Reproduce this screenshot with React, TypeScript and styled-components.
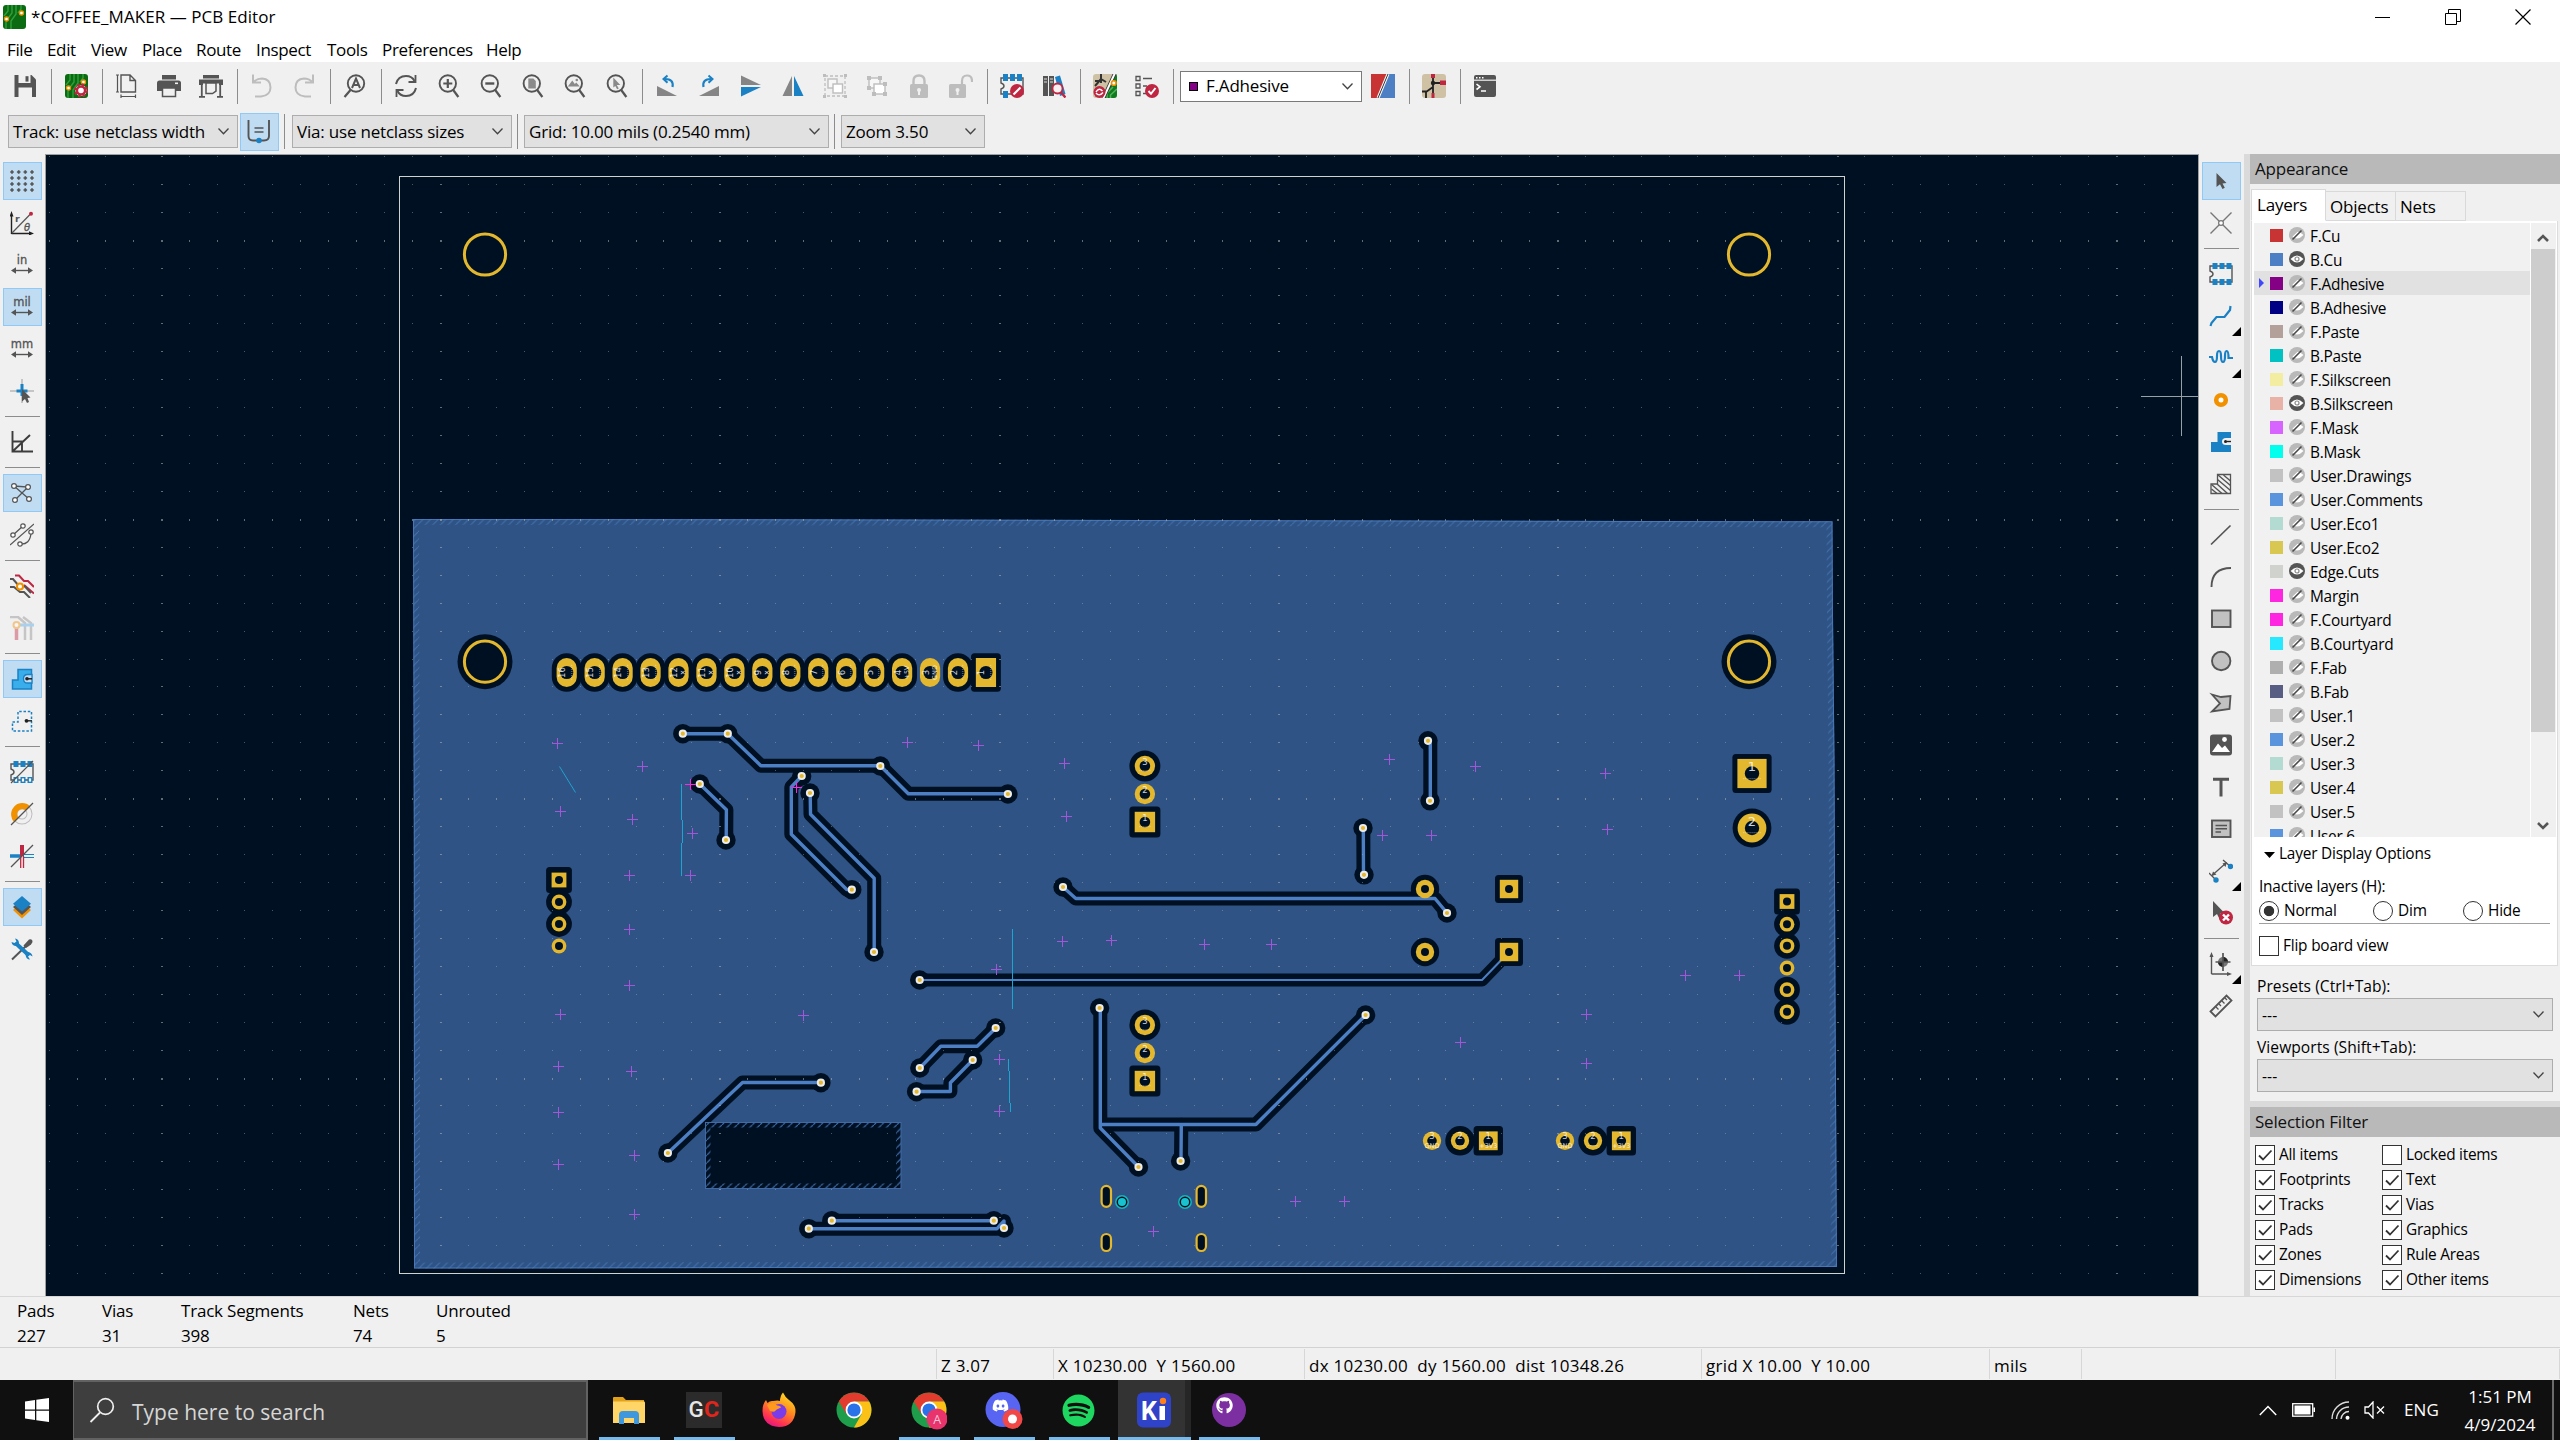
import React from "react";
import styled, { createGlobalStyle } from "styled-components";
import { FaDiscord, FaSpotify, FaGithub } from "react-icons/fa";

const NAVY = "#001023";
const GOLD = "#e3b72e";
const COPPER = "#4d7fc4";
const INK = "#545454";
const BLUE = "#1a81c4";
const RED = "#bf2641";
const AMBER = "#f29100";
const PALE = "#bdbdbd";

const Global = createGlobalStyle`
  *, *::before, *::after { box-sizing: border-box; }
  html, body { margin: 0; padding: 0; background: #f0f0f0; }
  body { width: 2560px; height: 1440px; overflow: hidden; }
  svg { display: block; flex: none; }
`;

const Screen = styled.div`
  width: 2560px;
  height: 1440px;
  display: flex;
  flex-direction: column;
  background: #f0f0f0;
  color: #000;
  font-family: "Open Sans", "Noto Sans", sans-serif;
  font-size: 17px;
  letter-spacing: -0.2px;
  line-height: 24px;
  white-space: pre;
  overflow: hidden;
`;

/* ---------- title and menu ---------- */

const TitleBar = styled.header`
  height: 34px;
  display: flex;
  align-items: center;
  background: #fff;
  padding: 0 2px 0 2px;
`;
const Title = styled.span`
  margin-left: 5px;
  flex: 1;
  letter-spacing: 0.05px;
`;
const WindowButton = styled.span`
  width: 70px;
  height: 34px;
  display: flex;
  align-items: center;
  justify-content: center;
`;
const MenuBar = styled.nav`
  height: 28px;
  background: #fff;
  display: flex;
  align-items: center;
  padding: 3px 0 0 7px;
  letter-spacing: -0.35px;
`;
const MenuItem = styled.span<{ $w: number }>`
  width: ${(p) => p.$w}px;
`;

/* ---------- toolbars ---------- */

const ToolRow = styled.div`
  height: 48px;
  display: flex;
  align-items: center;
  padding-left: 4px;
`;
const ComboRow = styled.div`
  height: 44px;
  display: flex;
  align-items: center;
  padding: 0 0 1px 8px;
`;
const ToolCell = styled.span`
  position: relative;
  flex: none;
  width: 42px;
  height: 42px;
  display: flex;
  align-items: center;
  justify-content: center;
`;
const ToolFace = styled.span<{ $on?: boolean }>`
  width: 39px;
  height: 38px;
  display: flex;
  align-items: center;
  justify-content: center;
  border: 1px solid ${(p) => (p.$on ? "#90c8f6" : "transparent")};
  background: ${(p) => (p.$on ? "#c0dcf3" : "transparent")};
`;
const Corner = styled.i`
  position: absolute;
  right: 1px;
  bottom: 1px;
  border-left: 9px solid transparent;
  border-bottom: 9px solid #000;
`;
const VSep = styled.i<{ $l?: number; $r?: number }>`
  flex: none;
  width: 1px;
  height: 35px;
  background: #8c8c8c;
  margin-left: ${(p) => p.$l ?? 5}px;
  margin-right: ${(p) => p.$r ?? 3}px;
`;
const HSep = styled.i`
  flex: none;
  width: 35px;
  height: 1px;
  margin: 4px 0;
  background: #8c8c8c;
`;
const Combo = styled.div<{ $w: number; $h?: number; $white?: boolean }>`
  flex: none;
  width: ${(p) => p.$w}px;
  height: ${(p) => p.$h ?? 33}px;
  display: flex;
  align-items: center;
  justify-content: space-between;
  padding: 0 7px 0 4px;
  border: 1px solid ${(p) => (p.$white ? "#7a7a7a" : "#adadad")};
  background: ${(p) => (p.$white ? "#fff" : "#e1e1e1")};
`;
const ComboLabel = styled.span`
  display: flex;
  align-items: center;
  gap: 8px;
`;
const ComboSwatch = styled.i`
  width: 9px;
  height: 9px;
  background: #840084;
  border: 1px solid #000;
  margin-left: 4px;
`;

/* ---------- main area ---------- */

const Main = styled.main`
  height: 1143px;
  display: flex;
  border-bottom: 1px solid #d7d7d7;
`;
const SideBar = styled.div`
  flex: none;
  width: 45px;
  display: flex;
  flex-direction: column;
  align-items: center;
  padding: 6px 1px 0 0;
`;
const CanvasFrame = styled.div`
  flex: none;
  width: 2154px;
  height: 1142px;
  border: solid #a0a0a0;
  border-width: 1px 1px 0 1px;
  background: ${NAVY};
`;
const Splitter = styled.i`
  flex: none;
  width: 6px;
  background: #dadada;
`;
const Panels = styled.aside`
  flex: none;
  width: 310px;
  display: flex;
  flex-direction: column;
`;
const PaneHeader = styled.h2`
  margin: 0;
  flex: none;
  height: 30px;
  padding: 0 0 0 5px;
  background: #b9b9b9;
  color: #111;
  font-weight: 400;
  font-size: 17px;
  line-height: 30px;
`;
const TabStrip = styled.div`
  height: 37px;
  display: flex;
  align-items: flex-end;
  padding-left: 1px;
  font-size: 17px;
`;
const Tab = styled.span<{ $active?: boolean; $w: number }>`
  width: ${(p) => p.$w}px;
  height: ${(p) => (p.$active ? 32 : 30)}px;
  padding: ${(p) => (p.$active ? "3px 0 0 5px" : "3px 0 0 4px")};
  border: 1px solid #d9d9d9;
  border-left-width: ${(p) => (p.$active ? 1 : 0)}px;
  border-bottom-color: ${(p) => (p.$active ? "#fff" : "#d9d9d9")};
  background: ${(p) => (p.$active ? "#fff" : "#f0f0f0")};
`;
const TabPage = styled.div`
  width: 307px;
  height: 745px;
  margin-left: 1px;
  padding: 2px 0 0 2px;
  background: #fff;
  border: 1px solid #dcdcdc;
  border-top: none;
  font-size: 15.4px;
`;
const ListBox = styled.div`
  display: flex;
  height: 614px;
  overflow: hidden;
  width: 303px;
`;
const LayerList = styled.div`
  width: 276px;
  background: #f1f1f1;
`;
const LayerRow = styled.div<{ $active?: boolean }>`
  height: 24px;
  display: flex;
  align-items: center;
  padding-left: 5px;
  background: ${(p) => (p.$active ? "#e1e1e1" : "transparent")};
`;
const Arrow = styled.i<{ $on?: boolean }>`
  flex: none;
  width: 5px;
  height: 10px;
  border: 5px solid transparent;
  border-right: 0;
  border-left-color: ${(p) => (p.$on ? "#3f48ff" : "transparent")};
  margin-right: 6px;
`;
const Swatch = styled.i<{ $c: string }>`
  flex: none;
  width: 13px;
  height: 13px;
  background: ${(p) => p.$c};
  margin-right: 6px;
`;
const LayerName = styled.span`
  margin-left: 5px;
  padding-top: 3px;
  letter-spacing: -0.25px;
`;
const ScrollBar = styled.div`
  width: 26px;
  display: flex;
  flex-direction: column;
  align-items: center;
  background: #f0f0f0;
  border-left: 1px solid #fff;
  padding-right: 1px;
`;
const ScrollEnd = styled.span`
  height: 26px;
  display: flex;
  align-items: center;
  padding-top: 3px;
`;
const Thumb = styled.i`
  width: 24px;
  height: 483px;
  background: #cdcdcd;
  margin-bottom: 79px;
`;
const OptionsTitle = styled.div`
  display: flex;
  align-items: center;
  gap: 4px;
  padding: 0 0 0 10px;
  height: 34px;
  margin-bottom: 4px;
`;
const FieldLabel = styled.div`
  height: 24px;
  padding-left: 5px;
`;
const RadioLine = styled.div`
  display: flex;
  align-items: center;
  margin-left: 5px;
  width: 291px;
  height: 25px;
  border-bottom: 1px solid #a0a0a0;
`;
const RadioItem = styled.span<{ $w: number }>`
  width: ${(p) => p.$w}px;
  display: flex;
  align-items: center;
  gap: 5px;
`;
const Radio = styled.i<{ $on?: boolean }>`
  width: 20px;
  height: 20px;
  border-radius: 50%;
  border: 1px solid #333;
  background: ${(p) => (p.$on ? "radial-gradient(circle, #333 0 4.8px, #fff 5.6px)" : "#fff")};
`;
const FlipRow = styled.div`
  padding: 9px 0 0 5px;
`;
const CheckItem = styled.span`
  display: flex;
  align-items: center;
  gap: 4px;
  height: 25px;
`;
const Box = styled.i`
  flex: none;
  width: 20px;
  height: 20px;
  background: #fff;
  border: 1px solid #333;
`;
const PresetBlock = styled.div`
  height: 135px;
  padding: 8px 0 0 7px;
  font-size: 15.6px;
  letter-spacing: 0.05px;
`;
const PresetLabel = styled.div`
  height: 24px;
`;
const PresetGap = styled.div`
  height: 4px;
`;
const Sash = styled.i`
  height: 6px;
  background: #dadada;
`;
const FilterGrid = styled.div`
  display: grid;
  grid-template-columns: 127px 160px;
  padding: 5px 0 0 5px;
  font-size: 15.4px;
  letter-spacing: -0.25px;
`;

/* ---------- bottom ---------- */

const InfoPanel = styled.section`
  height: 51px;
  display: flex;
  padding: 1px 0 0 17px;
  border-bottom: 1px solid #d2d2d2;
`;
const InfoItem = styled.div<{ $w: number }>`
  width: ${(p) => p.$w}px;
  display: flex;
  flex-direction: column;
  line-height: 25px;
`;
const StatusBar = styled.footer`
  height: 32px;
  display: flex;
  align-items: center;
  padding-bottom: 1px;
`;
const StatusCell = styled.span<{ $w: number }>`
  width: ${(p) => p.$w}px;
  height: 30px;
  line-height: 34px;
  padding-left: 4px;
  border-right: 1px solid #d7d7d7;
  letter-spacing: 0.25px;
`;
const TaskBar = styled.div`
  height: 60px;
  display: flex;
  background: #101010;
  color: #fff;
`;
const StartButton = styled.span`
  width: 73px;
  display: flex;
  align-items: center;
  justify-content: center;
`;
const SearchBox = styled.div`
  width: 515px;
  display: flex;
  align-items: center;
  gap: 17px;
  padding-left: 15px;
  background: #3e3e3e;
  border: 2px solid #626262;
  border-left-width: 1px;
  color: #d6d6d6;
  margin-right: 4px;
`;
const SearchText = styled.span`
  font-size: 21px;
  letter-spacing: 0;
  padding-top: 4px;
`;
const TaskItem = styled.span<{ $open?: boolean; $active?: boolean }>`
  width: ${(p) => (p.$active ? 73 : 61)}px;
  margin: 0 ${(p) => (p.$active ? 1 : 7)}px;
  padding: 3px ${(p) => (p.$active ? 1 : 2)}px 0 0;
  display: flex;
  align-items: center;
  justify-content: center;
  border-bottom: 3px solid ${(p) => (p.$open ? "#76b9ed" : "transparent")};
  background: ${(p) => (p.$active ? "linear-gradient(90deg, #333 0 67px, #262626 67px)" : "none")};
`;
const Tray = styled.div`
  margin-left: auto;
  display: flex;
  align-items: center;
`;
const Clock = styled.div`
  width: 92px;
  margin-left: 14px;
  text-align: center;
  line-height: 28px;
  padding-top: 1px;
  letter-spacing: 0;
`;
const TrayText = styled.span`
  width: 34px;
  margin-left: 19px;
  letter-spacing: 0.1px;
`;
const ShowDesktop = styled.i`
  width: 8px;
  height: 60px;
  border-left: 2px solid #6b6b6b;
  margin-left: 6px;
`;
const Gap = styled.i<{ $w: number }>`
  flex: none;
  width: ${(p) => p.$w}px;
`;

/* ---------- icons ---------- */

const Svg: React.FC<{ w?: number; h?: number; children: React.ReactNode }> = ({ w = 24, h = 24, children }) => (
  <svg width={w} height={h} viewBox={`0 0 ${w} ${h}`} fill="none">
    {children}
  </svg>
);

const Chevron = () => (
  <Svg w={13} h={9}>
    <path d="M1.5 1.5 L6.5 6.8 L11.5 1.5" stroke="#444" strokeWidth="1.3" />
  </Svg>
);

const Lens = ({ children }: { children?: React.ReactNode }) => (
  <>
    <circle cx="11.8" cy="9.5" r="8.2" stroke={INK} strokeWidth="1.9" />
    <path d="M17.2 16 L22.4 23" stroke={INK} strokeWidth="2.2" />
    <g transform="translate(-0.7 0)">{children}</g>
  </>
);

const PcbBase = () => (
  <>
    <rect x="1" y="0" width="23" height="24" rx="3" fill="#0a6b12" />
    <path d="M6 0 v6 l-4 5 M10 0 v8 l-6 8 v8 M14 0 v9 l-5 7 v8 M19 0 v4 l-3 4" stroke="#2fa03a" strokeWidth="1.4" />
    <circle cx="4.5" cy="14" r="2" fill="#fff" stroke={AMBER} strokeWidth="1.3" />
    <circle cx="19.5" cy="8" r="2" fill="#fff" stroke={AMBER} strokeWidth="1.3" />
  </>
);

const Chip = ({ outline }: { outline?: boolean }) => (
  <>
    <path d="M1 4 H23 V20 H1 V15 Q4 14 4 12 Q4 10 1 9 Z" stroke={INK} strokeWidth="1.4" />
    {[3.5, 10.5, 17.5].map((x) => (
      <g key={x}>
        <rect x={x} y="1" width="5" height="6" fill={BLUE} />
        <rect
          x={x + (outline ? 0.7 : 0)}
          y={outline ? 17.7 : 17}
          width={outline ? 3.6 : 5}
          height={outline ? 4.6 : 6}
          fill={outline ? "#fff" : BLUE}
          stroke={outline ? BLUE : "none"}
          strokeWidth="1.4"
        />
      </g>
    ))}
  </>
);

const UnitArrow = ({ label }: { label: string }) => (
  <>
    <text x="12" y="11" textAnchor="middle" fontFamily="DejaVu Sans" fontWeight="400" fontSize={11.5} letterSpacing="0" fill={INK} stroke={INK} strokeWidth="0.3">{label}</text>
    <path d="M3 17.5 H21" stroke={INK} strokeWidth="1.4" />
    <path d="M1 17.5 L6 14.3 V20.7 Z M23 17.5 L18 14.3 V20.7 Z" fill={INK} />
  </>
);

const icons: Record<string, React.ReactNode> = {
  save: (
    <>
      <path d="M1.5 1 H18.5 L23 5.5 V23 H1.5 Z" fill={INK} />
      <rect x="5.5" y="1" width="12" height="8" fill="#f0f0f0" />
      <rect x="12.5" y="2.2" width="3" height="5.4" fill={INK} />
      <rect x="5.5" y="13.5" width="13.5" height="9.5" fill="#f0f0f0" />
    </>
  ),
  setup: (
    <>
      <PcbBase />
      <circle cx="17" cy="16.5" r="5.6" fill="#fff" stroke={RED} strokeWidth="3" strokeDasharray="2.4 2" />
      <circle cx="17" cy="16.5" r="4" fill="#fff" stroke={RED} strokeWidth="2.4" />
    </>
  ),
  page: (
    <>
      <path d="M6 1 H15 L20.500 6.5 V18 H6 Z M15 1 V6.5 H20.500" stroke={INK} strokeWidth="1.4" />
      <path d="M2.500 1 V18 M1 1 H4 M1 18 H4 M6 22.5 H20.500 M6 20.5 V24 M20.500 20.5 V24" stroke={INK} strokeWidth="1.2" />
    </>
  ),
  print: (
    <>
      <rect x="5" y="1" width="14" height="4.5" fill={INK} />
      <path d="M0 9 Q0 6.5 2.5 6.5 H21.5 Q24 6.5 24 9 V17 H0 Z" fill={INK} />
      <rect x="5.5" y="14" width="13" height="8.5" fill="#f0f0f0" stroke={INK} strokeWidth="1.5" />
      <rect x="18" y="8.5" width="3" height="1.6" fill="#f0f0f0" />
    </>
  ),
  plot: (
    <>
      <rect x="4" y="1" width="16" height="3.5" fill={INK} />
      <path d="M0 5.5 H24 V11 H20 V9.5 H4 V11 H0 Z" fill={INK} />
      <path d="M7 9 H17 V17 L13.5 19.5 H7 Z" fill="#f0f0f0" stroke={INK} strokeWidth="1.5" />
      <path d="M2.8 11 V23 M21.2 11 V23 M0 22.8 H6 M18 22.8 H24" stroke={INK} strokeWidth="1.8" />
    </>
  ),
  undo: <path d="M3 0.5 V8.5 H11 M3.5 8 Q7 4.500 12 4.5 Q20.500 5 20.500 13.500 Q20.500 21.500 11 22.500 H5" stroke={PALE} strokeWidth="2" />,
  redo: <path d="M21 0.5 V8.5 H13 M20.5 8 Q17 4.500 12 4.5 Q3.500 5 3.500 13.500 Q3.500 21.500 13 22.500 H19" stroke={PALE} strokeWidth="2" />,
  find: (
    <>
      <circle cx="13" cy="9.5" r="8.2" stroke={INK} strokeWidth="1.9" />
      <path d="M7.5 16 L1.5 23" stroke={INK} strokeWidth="2.2" />
      <path d="M9 14 L13 4.5 L17 14 M10.5 11 H15.5" stroke={INK} strokeWidth="2" />
    </>
  ),
  refresh: (
    <>
      <path d="M2 10 Q4 2 12 2 Q18 2 20.5 7 M22 14 Q20 22 12 22 Q6 22 3.5 17" stroke={INK} strokeWidth="2" />
      <path d="M21.5 1 V8 H14.5 M2.5 23 V16 H9.5" stroke={INK} strokeWidth="1.8" />
    </>
  ),
  zoomIn: <Lens><path d="M12.5 5 V14 M8 9.5 H17" stroke={INK} strokeWidth="2.2" /></Lens>,
  zoomOut: <Lens><path d="M8 9.5 H17" stroke={INK} strokeWidth="2.4" /></Lens>,
  zoomPage: <Lens><path d="M9 4.5 H14 L16.5 7 V14.5 H9 Z" fill="#8a8a8a" /></Lens>,
  zoomObj: (
    <Lens>
      <path d="M6.5 12.5 L11 6.5 L13.5 10 L15 8.5 L18.5 12.5 Z" fill="#8a8a8a" />
      <circle cx="15.5" cy="6" r="1.3" fill="#8a8a8a" />
    </Lens>
  ),
  zoomSel: <Lens><path d="M10 3.5 L17 11 L13.5 11 L15.5 14.5 L13.8 15.3 L12 12 L10 13.5 Z" fill="#8a8a8a" /></Lens>,
  rotL: (
    <>
      <path d="M2 12 L22 22 H2 Z" fill="#858585" />
      <path d="M17.5 13 Q19 5 10 5" stroke={BLUE} strokeWidth="2.2" />
      <path d="M12.5 1.5 L8.5 5 L12.5 8.8" stroke={BLUE} strokeWidth="2" />
    </>
  ),
  rotR: (
    <>
      <path d="M22 12 L2 22 H22 Z" fill="#858585" />
      <path d="M6.5 13 Q5 5 14 5" stroke={BLUE} strokeWidth="2.2" />
      <path d="M11.5 1.5 L15.5 5 L11.5 8.8" stroke={BLUE} strokeWidth="2" />
    </>
  ),
  mirV: (
    <>
      <path d="M2 1.5 L22 11 H2 Z" fill="#858585" />
      <path d="M2 13 H22 L2 22.5 Z" fill={BLUE} />
    </>
  ),
  mirH: (
    <>
      <path d="M11 2 V22 H1.5 Z" fill="#858585" />
      <path d="M13 2 V22 H22.5 Z" fill={BLUE} />
    </>
  ),
  group: (
    <>
      <rect x="2" y="2" width="20" height="20" stroke={PALE} strokeWidth="1.3" strokeDasharray="3 2" />
      <rect x="5" y="5" width="9" height="9" fill="#f7f7f7" stroke={PALE} strokeWidth="1.4" />
      <rect x="10" y="10" width="9.5" height="9" fill="#fff" stroke={PALE} strokeWidth="1.4" />
      <path d="M0 0h3v3H0z M21 0h3v3h-3z M0 21h3v3H0z M21 21h3v3h-3z" fill={PALE} />
    </>
  ),
  ungroup: (
    <>
      <rect x="4" y="4" width="11" height="10" fill="#f7f7f7" stroke={PALE} strokeWidth="1.4" />
      <rect x="9" y="10" width="11" height="10" fill="#fff" stroke={PALE} strokeWidth="1.4" />
      <path d="M2 2h4v4H2z M13 2h4v4h-4z M2 12h4v4H2z M7 18h4v4H7z M18 18h4v4h-4z M18 8h4v4h-4z" fill={PALE} />
    </>
  ),
  lock: (
    <>
      <path d="M6.5 11 V7 Q6.5 1.500 12 1.5 Q17.5 1.500 17.5 7 V11" stroke={PALE} strokeWidth="2.4" />
      <rect x="3" y="10" width="18" height="14" rx="1.5" fill={PALE} />
      <circle cx="12" cy="16" r="2" fill="#f0f0f0" />
      <rect x="11" y="16" width="2" height="5" fill="#f0f0f0" />
    </>
  ),
  unlock: (
    <>
      <path d="M13 11 V7 Q13 1.500 18 1.5 Q23 1.500 23 7 V8" stroke={PALE} strokeWidth="2.2" />
      <rect x="0" y="10" width="17" height="14" rx="1.5" fill={PALE} />
      <circle cx="8.5" cy="16" r="2" fill="#f0f0f0" />
      <rect x="7.5" y="16" width="2" height="5" fill="#f0f0f0" />
    </>
  ),
  fpEdit: (
    <>
      <path d="M1 4 H23 V20 H1 V15 Q4 14 4 12 Q4 10 1 9 Z" stroke={INK} strokeWidth="1.4" />
      <path d="M3 0h5v7H3z M10 0h5v7h-5z M17 0h5v7h-5z M3 17h5v7H3z" fill={BLUE} />
      <circle cx="17" cy="17" r="7" fill={RED} />
      <path d="M13.5 20.5 L20.5 13.5" stroke="#fff" strokeWidth="2.2" />
    </>
  ),
  library: (
    <>
      <path d="M1 2h5v20H1z M7 2h5v20H7z" fill={INK} />
      <path d="M2 5h3 M2 8h3 M8 5h3 M8 8h3" stroke="#ddd" strokeWidth="1" />
      <path d="M13 3 L18 1.5 L23.5 20 L18 22 Z" fill={BLUE} />
      <circle cx="15.5" cy="14.5" r="5" fill="#f6f0f0" stroke={RED} strokeWidth="1.8" />
      <path d="M19 18.5 L23.5 23.5" stroke={RED} strokeWidth="2.4" />
    </>
  ),
  update: (
    <>
      <rect width="24" height="24" rx="3" fill="#cfc2a4" />
      <path d="M11 24 L22 0 Q24 0 24 3 V21 Q24 24 21 24 Z" fill="#0f7d1e" />
      <path d="M14 24 V19 L20 13 M17.5 24 V21 L24 15" stroke="#53b25b" strokeWidth="1.5" />
      <path d="M8 0 V9 M8 5 L2 12 M8 5 L13 8 M2 7 H8" stroke="#333" strokeWidth="2" />
      <path d="M22 -1 L10 25" stroke="#333" strokeWidth="3.6" />
      <path d="M22 -1 L10 25" stroke="#fff" strokeWidth="2" />
      <circle cx="20.8" cy="9" r="2.3" fill="#fff" stroke={AMBER} strokeWidth="1.6" />
      <circle cx="6.5" cy="18" r="6" fill={RED} />
      <path d="M3 18 Q6 13 9.500 17 M10 18.500 Q6 23 3 19" stroke="#fff" strokeWidth="1.4" />
    </>
  ),
  drc: (
    <>
      <path d="M1 2.5h4v4H1z M1 10h4v4H1z M1 17.5h4v4H1z" stroke={INK} strokeWidth="1.3" />
      <path d="M8 4.5h9 M8 12h4 M8 19.5h3" stroke={INK} strokeWidth="1.3" />
      <circle cx="17" cy="17" r="7" fill={RED} />
      <path d="M13.5 17 L16 19.8 L20.5 14" stroke="#fff" strokeWidth="2" />
    </>
  ),
  layerPair: (
    <>
      <rect width="24" height="24" fill="#c83434" />
      <path d="M17 0 H24 V24 H6.5 Z" fill={COPPER} />
      <path d="M17 0 L7 24" stroke="#fff" strokeWidth="3" />
      <path d="M17 0 L7 24" stroke="#333" strokeWidth="1" />
    </>
  ),
  schematic: (
    <>
      <rect width="24" height="24" rx="3" fill="#cfc2a4" />
      <path d="M11 0 V17 M11 9 H22 M11 13 L4 18 V24 M11 17 V24 M0 17.500 H5" stroke="#222" strokeWidth="1.800" />
      <circle cx="11" cy="9" r="2.2" fill="#222" />
      <path d="M9 0h4v4H9z M18 6.500h6v4.500h-6z M9.500 19h3v5H9.500z" fill={RED} />
    </>
  ),
  console: (
    <>
      <rect x="1" y="1" width="22" height="22" rx="2" fill={INK} />
      <path d="M1 6.2 H23" stroke="#f0f0f0" strokeWidth="1.2" />
      <path d="M3 3.8h1.5 M6 3.8h1.5 M9 3.8h1.5" stroke="#fff" strokeWidth="1.4" />
      <path d="M3.500 10 L7 12.800 L3.500 15.500 M8 17 H13" stroke="#fff" strokeWidth="1.6" />
    </>
  ),
  grid: (
    <>
      {[2, 8.7, 15.3, 22].map((x) => [3, 9, 15, 21].map((y) => (
        <path key={`${x}-${y}`} d={`M${x - 1.8} ${y} h3.6 M${x} ${y - 1.8} v3.6`} stroke={INK} strokeWidth="1.7" />
      )))}
    </>
  ),
  polar: (
    <>
      <path d="M1.5 23 V4 M1.5 22.5 H21" stroke="#222" strokeWidth="1.4" />
      <path d="M1.5 0 L-0.5 5.5 H3.5 Z M24 22.5 L19 20.3 V24.5 Z" fill="#222" />
      <path d="M2 22 L20 3.5" stroke={INK} strokeWidth="1.2" />
      <circle cx="21" cy="2.8" r="2" fill={RED} />
      <text x="5" y="11" fontFamily="DejaVu Sans" fontWeight="700" fontSize="9.5" fill={INK}>r</text>
      <text x="14" y="19.5" fontFamily="DejaVu Sans" fontStyle="italic" fontSize="10" fill={INK} stroke={INK} strokeWidth="0.3">θ</text>
    </>
  ),
  inch: <UnitArrow label="in" />,
  mil: <UnitArrow label="mil" />,
  mm: <UnitArrow label="mm" />,
  cross: (
    <>
      <path d="M12 0 V24 M0 12 H24" stroke="#9a9a9a" strokeWidth="1" />
      <path d="M12 5 V17 M6.5 12 H17.5" stroke={BLUE} strokeWidth="3" />
      <path d="M12 10 L12 22.5 L15 20 L17 24 L19 23 L17.5 19 L20.5 18.5 Z" fill={INK} />
    </>
  ),
  angle: <path d="M2.5 1 V21.5 H23 M2.5 21.5 L20 5 M2.5 11.5 H12 V21" stroke="#3c3c3c" strokeWidth="1.9" />,
  rats: (
    <>
      <path d="M4 5 L18 6 L5 19 M4 5 L19 18" stroke={INK} strokeWidth="1.3" />
      {[[4, 5], [18, 6], [5, 19], [19, 18]].map(([x, y]) => (
        <circle key={`${x}-${y}`} cx={x} cy={y} r="2.4" fill="#fff" stroke={INK} strokeWidth="1.2" />
      ))}
    </>
  ),
  curved: (
    <>
      <path d="M0 22 L24 1" stroke={INK} strokeWidth="1.2" />
      <path d="M3 12 L13 3 M10 21 Q20 22 21 10" stroke={INK} strokeWidth="1.3" />
      {[[3, 12], [13, 3], [10, 21], [21, 9]].map(([x, y]) => (
        <circle key={`${x}-${y}`} cx={x} cy={y} r="2.2" fill="#fff" stroke={INK} strokeWidth="1.2" />
      ))}
    </>
  ),
  netColor: (
    <>
      <path d="M5 1 H9 L14 6.500 H18 L24 12.500 M14 10.500 L24 19" stroke={RED} strokeWidth="2" transform="translate(0 0.5)" />
      <path d="M0 5 H3 L9 12 M0 13 H4 L10 18 H14 L20 24 M12 12.500 H15 L21 19" stroke={INK} strokeWidth="2" />
      <circle cx="10" cy="12.5" r="3" fill="#fff" stroke={AMBER} strokeWidth="2" />
    </>
  ),
  dimmed: (
    <g opacity="0.42">
      <path d="M0 1 H8 L15 7 V24 M13 1 L21 7 V24" stroke="#8c8c8c" strokeWidth="2.5" />
      <path d="M7 9 H24" stroke="#4aa5e8" strokeWidth="3" />
      <path d="M6.5 12 V24" stroke={RED} strokeWidth="3.5" />
      <circle cx="6.5" cy="9" r="3" fill="#fff" stroke={AMBER} strokeWidth="2" />
    </g>
  ),
  zoneFill: (
    <>
      <path d="M2.5 13 H8 V2.5 H21.5 V22 H2.5 Z" fill="#3aaeea" stroke={BLUE} strokeWidth="1.5" />
      <path d="M22 7.5 H17.5 Q13.5 7.5 13.5 11.7 Q13.5 16 17.5 16 H22 Z" fill="#c0dcf3" stroke={BLUE} strokeWidth="1.3" />
      <circle cx="17" cy="11.8" r="1.8" fill="#222" />
      <path d="M17 11.8H22" stroke="#222" strokeWidth="1.5" />
    </>
  ),
  zoneOutline: (
    <>
      <path d="M2.5 13 H8 V2.5 H21.5 V22 H2.5 Z" stroke={BLUE} strokeWidth="1.5" strokeDasharray="2.5 1.8" />
      <circle cx="16.5" cy="11.8" r="1.9" fill="#222" />
      <path d="M16.5 11.8H22" stroke="#222" strokeWidth="1.4" />
    </>
  ),
  padSketch: <><Chip outline /><path d="M1 23 L23 1" stroke={INK} strokeWidth="1.2" /></>,
  viaSketch: (
    <>
      <circle cx="12" cy="12" r="7.5" stroke="#bdbdbd" strokeWidth="6" />
      <circle cx="12" cy="12" r="7.5" stroke="#f0f0f0" strokeWidth="4" />
      <path d="M6.5 18 A7.5 7.5 0 0 1 18 6.5" stroke={AMBER} strokeWidth="6" />
      <path d="M1 23 L23 1" stroke={INK} strokeWidth="1.2" />
    </>
  ),
  trackSketch: (
    <>
      <path d="M0 12 H10" stroke={BLUE} strokeWidth="3.5" />
      <path d="M14 10.5 H24 M14 13.5 H24" stroke={BLUE} strokeWidth="1.2" />
      <path d="M12 1 V12" stroke={RED} strokeWidth="4" />
      <path d="M10.7 12 V24 M13.5 12 V24" stroke={RED} strokeWidth="1.3" />
      <path d="M1 23 L23 1" stroke={INK} strokeWidth="1.2" />
    </>
  ),
  layers: (
    <>
      <path d="M12 7 L21 15 L12 23.5 L3 15 Z" fill={AMBER} />
      <path d="M12 4 L21 12 L12 20 L3 12 Z" fill={INK} />
      <path d="M12 1 L21 8.8 L12 16.5 L3 8.8 Z" fill={BLUE} />
    </>
  ),
  wrench: (
    <>
      <path d="M2 22.5 L17 8" stroke={INK} strokeWidth="2" />
      <path d="M13.5 8.5 L19 2.5 Q22 1.5 22.5 4 Q23 7 16 11 Z" fill={INK} />
      <path d="M5.5 6 L18.5 18" stroke={BLUE} strokeWidth="4" />
      <path d="M1.5 5 Q2 9 6.5 9 L9 6.5 Q9 2 5 1.5 L6.5 4.5 L4.5 6 Z" fill={BLUE} />
      <path d="M15.5 17.5 Q16 22.5 20 22.5 L18 19.5 L20 18 L22.5 19.5 Q22 15.500 18 15 Z" fill={BLUE} />
    </>
  ),
  select: <path d="M7.5 4 L7.5 18 L11 15.2 L13.5 20 L15.8 18.8 L13.5 14.5 L17.5 14 Z" fill={INK} />,
  localRats: (
    <>
      <path d="M1.5 1.5 L22.5 22.5 M22.5 1.5 L1.5 22.5" stroke="#777" strokeWidth="1.4" />
      <circle cx="12" cy="12" r="2.4" fill="#fff" stroke="#777" strokeWidth="1.2" />
    </>
  ),
  footprint: <Chip />,
  route: <path d="M1.500 22 L2.500 19 L7.500 13 H15.500 L21 6 L21.500 2" stroke={BLUE} strokeWidth="2.2" />,
  tune: (
    <path
      d="M0 12 H3 Q4 17 6 17 Q8 17 8 11 Q8 6 10 6 Q12 6 12 11 Q12 17 14 17 Q16 17 16 11 Q16 6 17.7 6 Q19.5 6 19.5 13 H24"
      stroke={BLUE}
      strokeWidth="2.2"
      transform="translate(0 -1)"
    />
  ),
  via: <circle cx="12" cy="12" r="4.8" stroke={AMBER} strokeWidth="4.6" fill="#fff" />,
  zone: (
    <>
      <path d="M2 12 H8.5 V2 H22 V22 H2 Z" fill={BLUE} />
      <path d="M22 8 H17 Q13 8 13 11.5 Q13 15 17 15 H22 Z" fill="#f0f0f0" />
      <circle cx="16.5" cy="11.5" r="1.5" fill="#222" />
      <path d="M16.5 11.5H22" stroke="#222" strokeWidth="1.4" />
    </>
  ),
  ruleArea: (
    <>
      <path d="M2 12 H8.5 V2.5 H21.5 V21.5 H2 Z" stroke={INK} strokeWidth="1.3" />
      <path d="M2.500 17 L8 21.5 M2.500 12.500 L13 21.5 M8 12 L18.500 21.5 M8.500 7.500 L21.500 18.500 M9 3 L21.5 13.500 M14.500 3 L21.5 9" stroke={INK} strokeWidth="1.4" />
    </>
  ),
  line: <path d="M2 21.5 L21.5 2.5" stroke={INK} strokeWidth="1.7" />,
  arc: <path d="M2.5 22 Q2.5 3 22 3" stroke={INK} strokeWidth="1.9" />,
  rect: <rect x="3" y="3.5" width="18.5" height="16.5" fill="#c1c1c1" stroke={INK} strokeWidth="1.9" />,
  circle: <circle cx="12.2" cy="12" r="9.2" fill="#c1c1c1" stroke={INK} strokeWidth="1.9" />,
  polygon: <path d="M3 3.5 L12 6 L21.5 5 L20.5 18 L3 20.5 L11 12.5 Z" fill="#c1c1c1" stroke={INK} strokeWidth="1.8" />,
  image: (
    <>
      <rect x="1" y="1.5" width="22" height="21" rx="3" fill={INK} />
      <path d="M3 19 L9 10.5 L13 15 L16 12.5 L21 19 Z" fill="#fff" />
      <circle cx="15.5" cy="6.5" r="2.4" fill="#fff" />
    </>
  ),
  text: <path d="M4 4.200 H20 M12 3.5 V21.5" stroke={INK} strokeWidth="3" />,
  textbox: (
    <>
      <rect x="3" y="3.5" width="18.5" height="16.5" fill="#c1c1c1" stroke={INK} strokeWidth="1.9" />
      <path d="M6.5 8.5 H18 M6.5 11.8 H18 M6.5 15 H12" stroke={INK} strokeWidth="1.4" />
    </>
  ),
  dimension: (
    <>
      <path d="M0 14 L7 21 M14 1 L22 8 M3.5 16 L17 4" stroke={INK} strokeWidth="1.3" />
      <path d="M2.5 17 L4 12.5 L7.5 15.5 Z M18 3 L13.5 4.5 L16.5 8 Z" fill={INK} />
      <circle cx="7" cy="21" r="2.7" fill={BLUE} />
      <circle cx="21.5" cy="7.5" r="2.7" fill={BLUE} />
    </>
  ),
  del: (
    <>
      <path d="M4 0 V16 L8 13 L11 19 L14 17 L11 12.5 L15 11.5 Z" fill={INK} />
      <circle cx="17" cy="16.5" r="7" fill={RED} />
      <path d="M14 13.5 L20 19.5 M20 13.5 L14 19.5" stroke="#fff" strokeWidth="2.4" />
    </>
  ),
  origin: (
    <>
      <path d="M2.5 22 V3 M2.5 22 H20" stroke={INK} strokeWidth="1.4" />
      <path d="M2.5 0 L0.5 5 H4.5 Z M23 22 L18 20 V24 Z" fill={INK} />
      <circle cx="14" cy="10" r="5" fill="#777" />
      <path d="M14 5 A5 5 0 0 1 19 10 H9 A5 5 0 0 0 14 15 Z" fill="#222" />
      <path d="M14 1 V19 M6.5 10 H21.5" stroke={INK} strokeWidth="1.7" />
    </>
  ),
  measure: (
    <>
      <path d="M1.5 17.5 L17.5 1.5 L22.5 6.5 L6.5 22.5 Z" stroke={INK} strokeWidth="1.8" />
      <path d="M7 13 L9.5 15.5 M10 10 L12 12 M13 7 L15.5 9.5 M16 4 L18 6" stroke={INK} strokeWidth="1.3" />
    </>
  ),
};

const Tool = ({ name, on, corner }: { name: string; on?: boolean; corner?: boolean }) => (
  <ToolCell>
    <ToolFace $on={on}><Svg>{icons[name]}</Svg></ToolFace>
    {corner && <Corner />}
  </ToolCell>
);

const Strip = ({ spec, vertical }: { spec: string; vertical?: boolean }) => (
  <>
    {spec.split(" ").map((token, i) =>
      token === "|" ? (vertical ? <HSep key={i} /> : <VSep key={i} />) : (
        <Tool key={i} name={token.replace(/[*+]/, "")} on={token.endsWith("*")} corner={token.endsWith("+")} />
      )
    )}
  </>
);

/* ---------- board drawing ---------- */

type Pt = [number, number];

const line = (pts: Pt[]) => "M" + pts.map((p) => p.join(" ")).join(" L");

const buildGrid = (coarse: boolean) => {
  const step = 27.93;
  let d = "";
  for (let i = -4; i < 74; i++) {
    for (let j = -3; j < 38; j++) {
      const bigX = i % 10 === 0;
      const bigY = j % 10 === 0;
      if ((bigX || bigY) !== coarse) continue;
      const x = Math.round(160.7 + i * step);
      const y = Math.round(239.6 + j * step);
      if (x < 46 || y < 155) continue;
      const w = bigX ? 2 : 1;
      const h = bigY ? 2 : 1;
      d += `M${x} ${y}h${w}v${h}h-${w}z`;
    }
  }
  return d;
};
const fineGrid = buildGrid(false);
const coarseGrid = buildGrid(true);

const tracks: { pts: Pt[]; w?: number }[] = [
  { pts: [[682.8, 733.7], [727.8, 733.7], [760.9, 765.7], [880.3, 765.7], [908.3, 793.8], [1007.9, 793.8]] },
  { pts: [[699.8, 784], [726.4, 809.7], [726.2, 840]] },
  { pts: [[801.7, 776], [791.3, 787], [791.3, 834.3], [846.7, 889.5], [851.8, 889.7]] },
  { pts: [[810.2, 793], [810.5, 814.3], [874.2, 878.3], [874.2, 952]] },
  { pts: [[1063, 887], [1075.8, 898.5], [1435, 898.5], [1447, 913]] },
  { pts: [[919.7, 980], [1482, 980], [1509, 952]], w: 2 },
  { pts: [[1428, 740.8], [1430.3, 744], [1430.3, 800.8]] },
  { pts: [[1363.3, 828], [1363.5, 874.8]] },
  { pts: [[667.9, 1153], [742.5, 1082.5], [820.9, 1082.5]] },
  { pts: [[995.7, 1028], [977.2, 1046.3], [940.8, 1046.3], [919.8, 1068]] },
  { pts: [[972.7, 1060], [950.4, 1082.7], [950.4, 1091.5], [916.6, 1091.5]] },
  { pts: [[1100.3, 1008], [1100.3, 1128], [1138.5, 1167]] },
  { pts: [[1100.9, 1124.5], [1255.9, 1124.5], [1365.6, 1015]] },
  { pts: [[1181.3, 1124.7], [1181, 1161]] },
  { pts: [[831.8, 1220.7], [993.8, 1220.7]] },
  { pts: [[808.8, 1228.7], [997, 1228.7], [1004, 1221], [1004, 1228]] },
];

const vias: Pt[] = [
  [682.8, 733.7], [727.8, 733.7], [880.3, 766], [1007.9, 794], [699.8, 784], [726, 840], [801.7, 776],
  [851.8, 889.7], [810, 793], [874, 952], [1063, 887], [1447, 913], [919.7, 980], [1428, 740.8],
  [1430, 800.8], [1363, 828], [1364, 874.8], [667.9, 1153], [820.9, 1082.7], [995.7, 1028], [919.8, 1068],
  [972.7, 1060], [916.6, 1091.7], [1099.6, 1008], [1138.5, 1167], [1365.6, 1015], [1180.6, 1161],
  [831.8, 1220.7], [993.8, 1220.7], [808.8, 1228.7], [1004, 1228],
];

type Pad = { x: number; y: number; r: number; ry?: number; hole: number; clear?: number; sq?: boolean; n?: string; net?: string; rot?: boolean };

const pads: Pad[] = [
  ...Array.from({ length: 16 }, (_, i): Pad => ({
    x: 566.7 + i * 27.95, y: 672.5, r: 10.1, ry: 14.5, hole: 6.6,
    clear: i === 13 ? 0 : 4.8, sq: i === 15, n: String(16 - i), rot: true,
    net: i >= 4 && i <= 7 ? "x" : i === 12 ? "+5V" : i === 13 ? "GND" : "········",
  })),
  ...[880, 902, 924, 946].map((y, i): Pad => ({ x: 559, y, r: 7.4, hole: 4, clear: i === 3 ? 0 : 5.5, sq: i === 0 })),
  ...[901.5, 924.2, 945.8, 968, 989.7, 1011.8].map((y, i): Pad => ({ x: 1787, y, r: 7.4, hole: 4, clear: i === 3 ? 0 : 5.5, sq: i === 0 })),
  ...[766, 794, 822, 1025, 1053, 1081].map((y, i): Pad => ({
    x: 1144.9, y, r: 10.2, hole: 5.3, clear: i % 3 === 1 ? 0 : 5.3, sq: i % 3 === 2, n: String(3 - (i % 3)), net: "······",
  })),
  ...[0, 133].flatMap((dx): Pad[] => [
    { x: 1432 + dx, y: 1140.8, r: 9.2, hole: 4.8, n: "3", net: "GND" },
    { x: 1460 + dx, y: 1140.8, r: 9.2, hole: 4.8, clear: 5.5, n: "2", net: "·····" },
    { x: 1488.3 + dx, y: 1140.8, r: 9.4, hole: 4.8, clear: 5.3, sq: true, n: "1", net: "+3V3" },
  ]),
  { x: 1425, y: 889, r: 9.2, hole: 4, clear: 5 },
  { x: 1425, y: 952, r: 9.2, hole: 4, clear: 5 },
  { x: 1509, y: 889, r: 9.2, hole: 4, clear: 4.8, sq: true },
  { x: 1509, y: 952, r: 9.2, hole: 4, clear: 4.8, sq: true },
  { x: 1752, y: 773.5, r: 14.6, hole: 7.2, clear: 5, sq: true, n: "1", net: "·········" },
  { x: 1752, y: 828, r: 14.4, hole: 7.2, clear: 5, n: "2", net: "·········" },
];

const crosses: Pt[] = [
  [557.5, 743.5], [642.5, 766.5], [907.5, 742.5], [978.5, 745.5], [1064.5, 763.5], [1066.5, 816.5], [560.5, 811.5],
  [632.5, 819.5], [692.5, 833.5], [690.5, 875.5], [629.5, 875.5], [629.5, 929.5], [629.5, 985.5], [996.5, 969.5],
  [1062.5, 941.5], [1111.5, 940.5], [560.5, 1014.5], [803.5, 1015.5], [558.5, 1066.5], [631.5, 1071.5],
  [558.5, 1112.5], [558.5, 1164.5], [634.5, 1155.5], [634.5, 1214.5], [999.5, 1059.5], [999.5, 1111.5],
  [1204.5, 944.5], [1271.5, 944.5], [1295.5, 1201.5], [1344.5, 1201.5], [1153.5, 1231.5], [1389.5, 759.5],
  [1475.5, 766.5], [1605.5, 773.5], [1607.5, 829.5], [1382.5, 835.5], [1431.5, 835.5], [1685.5, 975.5],
  [1739.5, 975.5], [1586.5, 1014.5], [1460.5, 1042.5], [1586.5, 1063.5],
];

const crossPath = (pts: Pt[]) => pts.map(([x, y]) => `M${x - 5.5} ${y}h11M${x} ${y - 5.5}v11`).join("");

const PadShape = ({ p, grow, fill }: { p: Pad; grow: number; fill: string }) => {
  const rx = p.r + grow;
  const ry = (p.ry ?? p.r) + grow;
  return <rect x={p.x - rx} y={p.y - ry} width={rx * 2} height={ry * 2} rx={p.sq ? (grow ? 3.5 : 0) : rx} fill={fill} />;
};

const PadLabel = ({ p }: { p: Pad }) => {
  const big = p.r > 12;
  return (
    <g transform={p.rot ? `rotate(-90 ${p.x} ${p.y})` : undefined} fill="#fff" opacity="0.8" fontFamily="DejaVu Sans" letterSpacing="0" textAnchor="middle">
      <text x={p.x} y={p.y - (big ? 2.5 : 1.5)} fontSize={big ? 13 : 8.5}>{p.n}</text>
      <text x={p.x} y={p.y + (p.net === "x" ? 6.5 : 7)} fontSize={p.net === "x" ? 7.5 : 6.5}>{p.net}</text>
    </g>
  );
};

const zonePoints = "413,519 890,519.5 1400,520.6 1832.5,521.3 1833,615 1834.5,760 1835.5,1000 1837,1267 1300,1267 840,1268 414,1268.5 413.8,830";

const Board = () => (
  <svg width="2152" height="1141" viewBox="46 155 2152 1141" fill="none">
    <defs>
      <pattern id="hatch" width="7.6" height="7.6" patternUnits="userSpaceOnUse">
        <path d="M0 7.6 L7.6 0" stroke={COPPER} strokeWidth="1" />
      </pattern>
      <clipPath id="zone"><polygon points={zonePoints} /></clipPath>
    </defs>

    <polygon points={zonePoints} fill="#2e5384" />
    <g clipPath="url(#zone)">
      <polygon points={zonePoints} stroke="url(#hatch)" strokeWidth="12" opacity="0.7" />
      <polygon points={zonePoints} stroke={COPPER} strokeWidth="2" opacity="0.8" />
    </g>

    <g strokeLinejoin="round" strokeLinecap="round" stroke={NAVY}>
      {tracks.map((t, i) => <path key={i} d={line(t.pts)} strokeWidth={t.w ? 12.8 : 14} />)}
    </g>
    {vias.map(([x, y], i) => <circle key={i} cx={x} cy={y} r="9.7" fill={NAVY} />)}
    {pads.filter((p) => p.clear).map((p, i) => <PadShape key={i} p={p} grow={p.clear!} fill={NAVY} />)}

    <rect x="705" y="1122.5" width="196" height="66" fill={NAVY} />
    <path d="M705 1122.5 H901 V1188.5 H705 Z M710.5 1127.5 V1183.5 H896 V1127.5 Z" fill="url(#hatch)" fillRule="evenodd" />
    <rect x="705.5" y="1122.5" width="195.5" height="66" stroke="#3f6aa6" />

    <g strokeLinejoin="round" strokeLinecap="round" stroke={COPPER}>
      {tracks.map((t, i) => <path key={i} d={line(t.pts)} strokeWidth={t.w ?? 3.4} />)}
    </g>

    <path d={fineGrid} fill="#b4b4b4" opacity="0.42" shapeRendering="crispEdges" />
    <path d={coarseGrid} fill="#b4b4b4" opacity="0.55" shapeRendering="crispEdges" />
    <rect x="399.5" y="176.5" width="1445" height="1097" stroke="#d0d2cd" />

    {([[485, 254.5], [1749, 254.5], [485, 661.7], [1749, 661.7]] as Pt[]).map(([x, y]) => (
      <g key={`${x}-${y}`}>
        {y > 500 && <circle cx={x} cy={y} r="27.5" fill={NAVY} />}
        <circle cx={x} cy={y} r="20.6" fill={NAVY} stroke={GOLD} strokeWidth="3" />
      </g>
    ))}

    {pads.map((p, i) => (
      <g key={i}>
        <PadShape p={p} grow={0} fill={GOLD} />
        <circle cx={p.x} cy={p.y} r={p.hole} fill={NAVY} />
        {p.n && <PadLabel p={p} />}
      </g>
    ))}

    {vias.map(([x, y], i) => (
      <g key={i}>
        <circle cx={x} cy={y} r="4.1" fill="#ececec" />
        <circle cx={x} cy={y} r="2.1" fill={GOLD} />
      </g>
    ))}

    {([[1106.3, 1196.3, 23], [1201.3, 1196.3, 23], [1106.3, 1242.5, 19], [1201.3, 1242.5, 19]] as [number, number, number][]).map(([x, y, h]) => (
      <rect key={`${x}-${y}`} x={x - 4.7} y={y - h / 2 + 1} width="9.4" height={h - 2} rx="4.7" fill={NAVY} stroke={GOLD} strokeWidth="2.2" />
    ))}
    {[1122, 1185].map((x) => (
      <g key={x}>
        <circle cx={x} cy="1202" r="6.2" fill={NAVY} stroke="#12b7bd" strokeWidth="1.5" />
        <circle cx={x} cy="1202" r="4" fill="#18c3cf" />
      </g>
    ))}

    <path d={crossPath(crosses)} stroke="#a556d8" />
    <path d={crossPath([[690.5, 784.5], [796.5, 787.5]])} stroke="#ff26e2" />
    <path
      d="M559.5 766.5 L575.5 792.5 M681.5 784 V820 M682.5 820 V843 M681.5 843 V876 M1012.5 929 V1009 M1008.5 1059 V1071 M1009.5 1071 V1103 M1010.5 1103 V1112"
      stroke="#1fa3cf"
    />
    <path d="M2141 396.5 H2198 M2181.5 356 V436" stroke="#9a9fa5" />
  </svg>
);

/* ---------- appearance panel ---------- */

const layers: [string, string][] = [
  ["F.Cu", "#c83434"], ["B.Cu", "#4d7fc4"], ["F.Adhesive", "#840084"], ["B.Adhesive", "#000084"],
  ["F.Paste", "#b4a09a"], ["B.Paste", "#00c2c2"], ["F.Silkscreen", "#f2eda1"], ["B.Silkscreen", "#e8b2a7"],
  ["F.Mask", "#d864ff"], ["B.Mask", "#02ffee"], ["User.Drawings", "#c2c2c2"], ["User.Comments", "#5994dc"],
  ["User.Eco1", "#b4dbd2"], ["User.Eco2", "#d8c852"], ["Edge.Cuts", "#d0d2cd"], ["Margin", "#ff26e2"],
  ["F.Courtyard", "#ff26e2"], ["B.Courtyard", "#26e9ff"], ["F.Fab", "#afafaf"], ["B.Fab", "#585d84"],
  ["User.1", "#c2c2c2"], ["User.2", "#5994dc"], ["User.3", "#b4dbd2"], ["User.4", "#d8c852"],
  ["User.5", "#c2c2c2"], ["User.6", "#5994dc"],
];
const shown = new Set(["B.Cu", "B.Silkscreen", "Edge.Cuts"]);

const Eye = ({ open }: { open: boolean }) => (
  <Svg w={16} h={16}>
    <circle cx="8" cy="8" r="8" fill={open ? "#545454" : "#b9b9b9"} />
    <path d="M1.5 8 Q8 1 14.5 8 Q8 15 1.5 8 Z" fill="#fff" />
    {open ? (
      <circle cx="8" cy="8" r="2" stroke="#8a8a8a" strokeWidth="1.2" />
    ) : (
      <>
        <path d="M1 10 L10 1.5" stroke="#b9b9b9" strokeWidth="3" />
        <path d="M3.5 12.5 L12.5 3.5" stroke="#4a4a4a" strokeWidth="1.6" />
      </>
    )}
  </Svg>
);

const Check = ({ label, on }: { label: string; on?: boolean }) => (
  <CheckItem>
    <Box>{on && <Svg w={18} h={18}><path d="M3 9.5 L7 13.5 L15.5 4.5" stroke="#333" strokeWidth="1.8" /></Svg>}</Box>
    {label}
  </CheckItem>
);

const filters = ["All items", "Locked items", "Footprints", "Text", "Tracks", "Vias", "Pads", "Graphics", "Zones", "Rule Areas", "Dimensions", "Other items"];

const AppearancePanel = () => (
  <Panels>
    <PaneHeader>Appearance</PaneHeader>
    <TabStrip>
      <Tab $active $w={75}>Layers</Tab>
      <Tab $w={70}>Objects</Tab>
      <Tab $w={70}>Nets</Tab>
    </TabStrip>
    <TabPage>
      <ListBox>
        <LayerList>
          {layers.map(([name, color]) => (
            <LayerRow key={name} $active={name === "F.Adhesive"}>
              <Arrow $on={name === "F.Adhesive"} />
              <Swatch $c={color} />
              <Eye open={shown.has(name)} />
              <LayerName>{name}</LayerName>
            </LayerRow>
          ))}
        </LayerList>
        <ScrollBar>
          <ScrollEnd><Svg w={14} h={10}><path d="M2 8 L7 3 L12 8" stroke="#555" strokeWidth="2.6" /></Svg></ScrollEnd>
          <Thumb />
          <ScrollEnd><Svg w={14} h={10}><path d="M2 2 L7 7 L12 2" stroke="#555" strokeWidth="2.6" /></Svg></ScrollEnd>
        </ScrollBar>
      </ListBox>
      <OptionsTitle><Svg w={11} h={7}><path d="M0 1 H11 L5.5 7 Z" fill="#000" /></Svg>Layer Display Options</OptionsTitle>
      <FieldLabel>Inactive layers (H):</FieldLabel>
      <RadioLine>
        <RadioItem $w={114}><Radio $on />Normal</RadioItem>
        <RadioItem $w={90}><Radio />Dim</RadioItem>
        <RadioItem $w={80}><Radio />Hide</RadioItem>
      </RadioLine>
      <FlipRow><Check label="Flip board view" /></FlipRow>
    </TabPage>
    <PresetBlock>
      <PresetLabel>Presets (Ctrl+Tab):</PresetLabel>
      <Combo $w={296}>---<Chevron /></Combo>
      <PresetGap />
      <PresetLabel>Viewports (Shift+Tab):</PresetLabel>
      <Combo $w={296}>---<Chevron /></Combo>
    </PresetBlock>
    <Sash />
    <PaneHeader>Selection Filter</PaneHeader>
    <FilterGrid>
      {filters.map((f) => <Check key={f} label={f} on={f !== "Locked items"} />)}
    </FilterGrid>
  </Panels>
);

/* ---------- taskbar icons ---------- */

const ChromeLogo = ({ badge }: { badge?: string }) => (
  <Svg w={36} h={40}>
    <g transform="translate(0 2)">
      <circle cx="18" cy="18" r="17.5" fill="#1e9e4a" />
      <path d="M2.8 9.5 A17.5 17.5 0 0 1 33.2 9.5 L18 9.5 L10.6 22.3 Z" fill="#e33b2e" />
      <path d="M33.2 9.5 A17.5 17.5 0 0 1 18 35.5 L25.5 22.3 L18 9.5 Z" fill="#fbc116" />
      <circle cx="18" cy="18" r="8.4" fill="#fff" />
      <circle cx="18" cy="18" r="6.6" fill="#2a72e8" />
      {badge && (
        <>
          <circle cx="26" cy="27" r="10.5" fill="#e8336d" />
          <text x="26" y="31.500" textAnchor="middle" fontSize="12.5" fontFamily="Open Sans" fill="#f9c6d6">{badge}</text>
        </>
      )}
    </g>
  </Svg>
);

const Explorer = () => (
  <Svg w={36} h={36}>
    <path d="M2 6 Q2 5 3 5 H12 L15 8 H33 V31 H2 Z" fill="#e2a11b" />
    <path d="M2 9.5 H33 Q34 9.5 34 10.5 V31 H2 Z" fill="#ffd567" />
    <path d="M8 32 V23 Q8 19 12 19 H24 Q28 19 28 23 V32 H23 V26 H13 V32 Z" fill="#3f97dd" />
  </Svg>
);

const GcLogo = () => (
  <Svg w={36} h={36}>
    <rect width="36" height="36" fill="#2b2b2b" />
    <text x="2.5" y="25" fontFamily="Roboto" fontWeight="500" fontSize="22" fill="#e6e6e6" textLength="15" lengthAdjust="spacingAndGlyphs">G</text>
    <text x="18" y="25" fontFamily="Roboto" fontWeight="700" fontSize="22" fill="#e1251b" textLength="15" lengthAdjust="spacingAndGlyphs">C</text>
  </Svg>
);

const Firefox = () => (
  <Svg w={36} h={36}>
    <defs>
      <linearGradient id="fx" x1="0.8" y1="0" x2="0.3" y2="1">
        <stop offset="0" stopColor="#ffe226" />
        <stop offset="0.45" stopColor="#ff8a1d" />
        <stop offset="0.8" stopColor="#ff3350" />
        <stop offset="1" stopColor="#e31587" />
      </linearGradient>
    </defs>
    <path d="M22 0.5 Q24 5 28 8 Q35 13 34.5 20 Q33 34.5 18 35 Q2 34 1.5 19 Q1.5 12 5 8 L6.5 11 Q9 8.5 12 9 Q17 8 19 9 Q19 4 22 0.5 Z" fill="url(#fx)" />
    <circle cx="18" cy="19.5" r="7.5" fill="#7a3be8" />
    <path d="M6 13 Q12 9 16 13.5 Q20 14 20 15.5 Q16 17 15 18 Q14 21 9 19 Z" fill="#ff9a1f" />
  </Svg>
);

const KiCad = () => (
  <Svg w={36} h={36}>
    <rect x="1" y="0.5" width="34" height="35" rx="6" fill="#2f43c8" />
    <text x="5" y="28" fontFamily="Roboto" fontWeight="700" fontSize="25" fill="#fff" letterSpacing="0">K</text>
    <rect x="23.5" y="14" width="5.5" height="14" fill="#fff" />
    <circle cx="27" cy="9" r="3.2" fill="#ff7f1a" />
  </Svg>
);

const menus: [string, number][] = [
  ["File", 40], ["Edit", 44], ["View", 51], ["Place", 54], ["Route", 60],
  ["Inspect", 71], ["Tools", 55], ["Preferences", 104], ["Help", 60],
];
const boardStats: [string, string, number][] = [
  ["Pads", "227", 85], ["Vias", "31", 79], ["Track Segments", "398", 172], ["Nets", "74", 83], ["Unrouted", "5", 100],
];

const App = () => (
  <Screen>
    <Global />
    <TitleBar>
      <Svg><PcbBase /></Svg>
      <Title>*COFFEE_MAKER — PCB Editor</Title>
      <WindowButton><Svg w={16} h={16}><path d="M0 8.5 H15" stroke="#000" /></Svg></WindowButton>
      <WindowButton><Svg w={16} h={16}><path d="M0.5 4.5 H11.5 V15.5 H0.5 Z M3.5 4.5 V0.5 H15.5 V12.5 H11.5" stroke="#000" /></Svg></WindowButton>
      <WindowButton><Svg w={16} h={16}><path d="M0.5 0.5 L15.5 15.5 M15.5 0.5 L0.5 15.5" stroke="#000" strokeWidth="1.2" /></Svg></WindowButton>
    </TitleBar>
    <MenuBar>
      {menus.map(([m, w]) => <MenuItem key={m} $w={w}>{m}</MenuItem>)}
    </MenuBar>
    <ToolRow>
      <Strip spec="save | setup | page print plot | undo redo | find | refresh zoomIn zoomOut zoomPage zoomObj zoomSel | rotL rotR mirV mirH group ungroup lock unlock | fpEdit library | update drc |" />
      <Gap $w={3} />
      <Combo $w={182} $h={31} $white><ComboLabel><ComboSwatch />F.Adhesive</ComboLabel><Chevron /></Combo>
      <Strip spec="layerPair | schematic | console" />
    </ToolRow>
    <ComboRow>
      <Combo $w={230}>Track: use netclass width<Chevron /></Combo>
      <ToolCell>
        <ToolFace $on>
          <Svg>
            <path d="M1.500 0 V16 Q1.500 20.5 6 20.5 H17 Q22 20.5 22 16 V0" stroke={INK} strokeWidth="1.9" />
            <path d="M7.500 8 H16.500 M7.500 12 H16.500" stroke={INK} strokeWidth="1.5" />
            <circle cx="12" cy="20.5" r="2.8" fill={BLUE} />
          </Svg>
        </ToolFace>
      </ToolCell>
      <VSep $l={4} $r={7} />
      <Combo $w={220}>Via: use netclass sizes<Chevron /></Combo>
      <VSep $l={5} $r={6} />
      <Combo $w={305}>Grid: 10.00 mils (0.2540 mm)<Chevron /></Combo>
      <VSep $l={5} $r={6} />
      <Combo $w={144}>Zoom 3.50<Chevron /></Combo>
    </ComboRow>
    <Main>
      <SideBar>
        <Strip vertical spec="grid* polar inch mil* mm cross | angle | rats* curved | netColor dimmed | zoneFill* zoneOutline | padSketch viaSketch trackSketch | layers* wrench" />
      </SideBar>
      <CanvasFrame><Board /></CanvasFrame>
      <SideBar>
        <Strip vertical spec="select* localRats | footprint route+ tune+ via zone ruleArea | line arc rect circle polygon image text textbox dimension+ del | origin+ measure" />
      </SideBar>
      <Splitter />
      <AppearancePanel />
    </Main>
    <InfoPanel>
      {boardStats.map(([k, v, w]) => (
        <InfoItem key={k} $w={w}><span>{k}</span><span>{v}</span></InfoItem>
      ))}
    </InfoPanel>
    <StatusBar>
      <StatusCell $w={937} />
      <StatusCell $w={117}>Z 3.07</StatusCell>
      <StatusCell $w={251}>X 10230.00  Y 1560.00</StatusCell>
      <StatusCell $w={397}>dx 10230.00  dy 1560.00  dist 10348.26</StatusCell>
      <StatusCell $w={288}>grid X 10.00  Y 10.00</StatusCell>
      <StatusCell $w={92}>mils</StatusCell>
      <StatusCell $w={254} />
      <StatusCell $w={224} />
    </StatusBar>
    <TaskBar>
      <StartButton>
        <Svg><path d="M0 3.5 L10 2 V11.5 H0 Z M11.3 1.8 L24 0 V11.5 H11.3 Z M0 12.7 H10 V22 L0 20.5 Z M11.3 12.7 H24 V24 L11.3 22.2 Z" fill="#fff" /></Svg>
      </StartButton>
      <SearchBox>
        <Svg w={26} h={26}>
          <circle cx="16.5" cy="9.5" r="7.8" stroke="#eee" strokeWidth="1.7" />
          <path d="M11 15.5 L1.5 25" stroke="#eee" strokeWidth="1.8" />
        </Svg>
        <SearchText>Type here to search</SearchText>
      </SearchBox>
      <TaskItem $open><Explorer /></TaskItem>
      <TaskItem $open><GcLogo /></TaskItem>
      <TaskItem><Firefox /></TaskItem>
      <TaskItem><ChromeLogo /></TaskItem>
      <TaskItem $open><ChromeLogo badge="A" /></TaskItem>
      <TaskItem $open>
        <Svg w={38} h={38}>
          <circle cx="18" cy="18.5" r="17.5" fill="#5865f2" />
          <FaDiscord x={7} y={6} width={23} height={23} color="#fff" />
          <circle cx="27.500" cy="28" r="10" fill="#f04747" />
          <circle cx="27.500" cy="28" r="4.5" fill="#fff" />
        </Svg>
      </TaskItem>
      <TaskItem $open><FaSpotify size={33} color="#1ed760" /></TaskItem>
      <TaskItem $open $active><KiCad /></TaskItem>
      <TaskItem $open>
        <Svg w={36} h={36}>
          <circle cx="18" cy="18" r="17" fill="#7b2fa0" />
          <FaGithub x={5} y={5} width={26} height={26} color="#fff" />
        </Svg>
      </TaskItem>
      <Tray>
        <Svg w={18} h={11}><path d="M0.8 10 L9 1.5 L17.2 10" stroke="#fff" strokeWidth="1.5" /></Svg>
        <Gap $w={15} />
        <Svg w={23} h={14}>
          <rect x="0.7" y="0.7" width="20" height="12.5" stroke="#fff" strokeWidth="1.3" />
          <rect x="2.5" y="2.5" width="16" height="9" fill="#fff" />
          <rect x="21.5" y="4.5" width="1.5" height="4.5" fill="#fff" />
        </Svg>
        <Gap $w={16} />
        <Svg w={19} h={19}>
          <path d="M1 18 A17 17 0 0 1 18 1 M5.5 18 A12.5 12.5 0 0 1 18 6 M10 18 A8 8 0 0 1 18 10.5" stroke="#ddd" strokeWidth="1.4" />
          <circle cx="16.5" cy="16.8" r="2" fill="#fff" />
        </Svg>
        <Gap $w={14} />
        <Svg w={21} h={18}><path d="M1 6 H4.5 L9 1 V17 L4.5 12 H1 Z M13 5.5 L20 12.5 M20 5.5 L13 12.5" stroke="#fff" strokeWidth="1.3" /></Svg>
        <TrayText>ENG</TrayText>
        <Gap $w={2} />
        <Clock>1:51 PM<br />4/9/2024</Clock>
        <ShowDesktop />
      </Tray>
    </TaskBar>
  </Screen>
);

export default App;
